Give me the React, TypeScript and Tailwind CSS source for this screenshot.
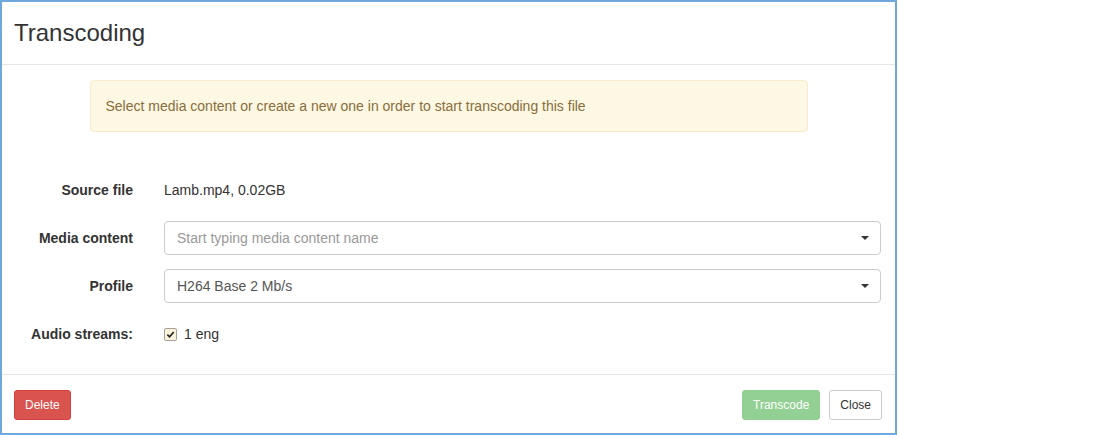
export default function App() {
  return (
    <div className="h-[435px] w-[1100px] bg-white font-['Liberation_Sans',Arial,sans-serif] text-[14px] text-[#333]">
      <div className="flex h-[435px] w-[897px] flex-col border-2 border-[#6fa8dc] bg-white">
        <div className="flex h-[63px] items-center border-b border-[#e5e5e5] px-[12px]">
          <h4 className="text-[24px] leading-none text-[#333]">Transcoding</h4>
        </div>

        <div className="flex flex-1 flex-col pt-[15px]">
          <div className="mx-auto w-[718px] rounded-[4px] border border-[#faebcc] bg-[#fcf8e3] px-[15px] py-[15px] leading-[20px] text-[#8a6d3b]">
            Select media content or create a new one in order to start transcoding this file
          </div>

          <div className="mt-[41px] flex h-[34px] items-center">
            <label className="w-[131px] text-right font-bold">Source file</label>
            <div className="ml-[31px]">Lamb.mp4, 0.02GB</div>
          </div>

          <div className="mt-[14px] flex h-[34px] items-center">
            <label className="w-[131px] text-right font-bold">Media content</label>
            <div className="ml-[31px] mr-[14px] flex h-[34px] flex-1 items-center justify-between rounded-[4px] border border-[#ccc] pl-[12px] pr-[11px]">
              <span className="text-[#999]">Start typing media content name</span>
              <span className="h-0 w-0 border-x-[4px] border-t-[4px] border-x-transparent border-t-[#333]" />
            </div>
          </div>

          <div className="mt-[14px] flex h-[34px] items-center">
            <label className="w-[131px] text-right font-bold">Profile</label>
            <div className="ml-[31px] mr-[14px] flex h-[34px] flex-1 items-center justify-between rounded-[4px] border border-[#ccc] pl-[12px] pr-[11px]">
              <span className="text-[#555]">H264 Base 2 Mb/s</span>
              <span className="h-0 w-0 border-x-[4px] border-t-[4px] border-x-transparent border-t-[#333]" />
            </div>
          </div>

          <div className="mt-[14px] flex h-[34px] items-center">
            <label className="w-[131px] text-right font-bold">Audio streams:</label>
            <div className="ml-[31px] flex items-center">
              <span className="flex h-[13px] w-[13px] items-center justify-center rounded-[2px] border border-[#a8a29a] bg-[#fcf3dc]">
                <svg viewBox="0 0 10 10" className="h-[9px] w-[9px]">
                  <path d="M1.5 5.2 L4 7.6 L8.6 2.2" fill="none" stroke="#222" strokeWidth="1.8" />
                </svg>
              </span>
              <span className="ml-[7px]">1 eng</span>
            </div>
          </div>
        </div>

        <div className="flex items-center justify-between border-t border-[#e5e5e5] pb-[13px] pl-[12px] pr-[13px] pt-[15px]">
          <button className="h-[30px] rounded-[3px] border border-[#d43f3a] bg-[#d9534f] px-[10px] text-[12px] text-white">
            Delete
          </button>
          <div className="flex gap-[9px]">
            <button className="h-[30px] rounded-[3px] border border-[#8fcf8f] bg-[#93d093] px-[10px] text-[12px] text-white">
              Transcode
            </button>
            <button className="h-[30px] rounded-[3px] border border-[#ccc] bg-white px-[10px] text-[12px] text-[#333]">
              Close
            </button>
          </div>
        </div>
      </div>
    </div>
  );
}
